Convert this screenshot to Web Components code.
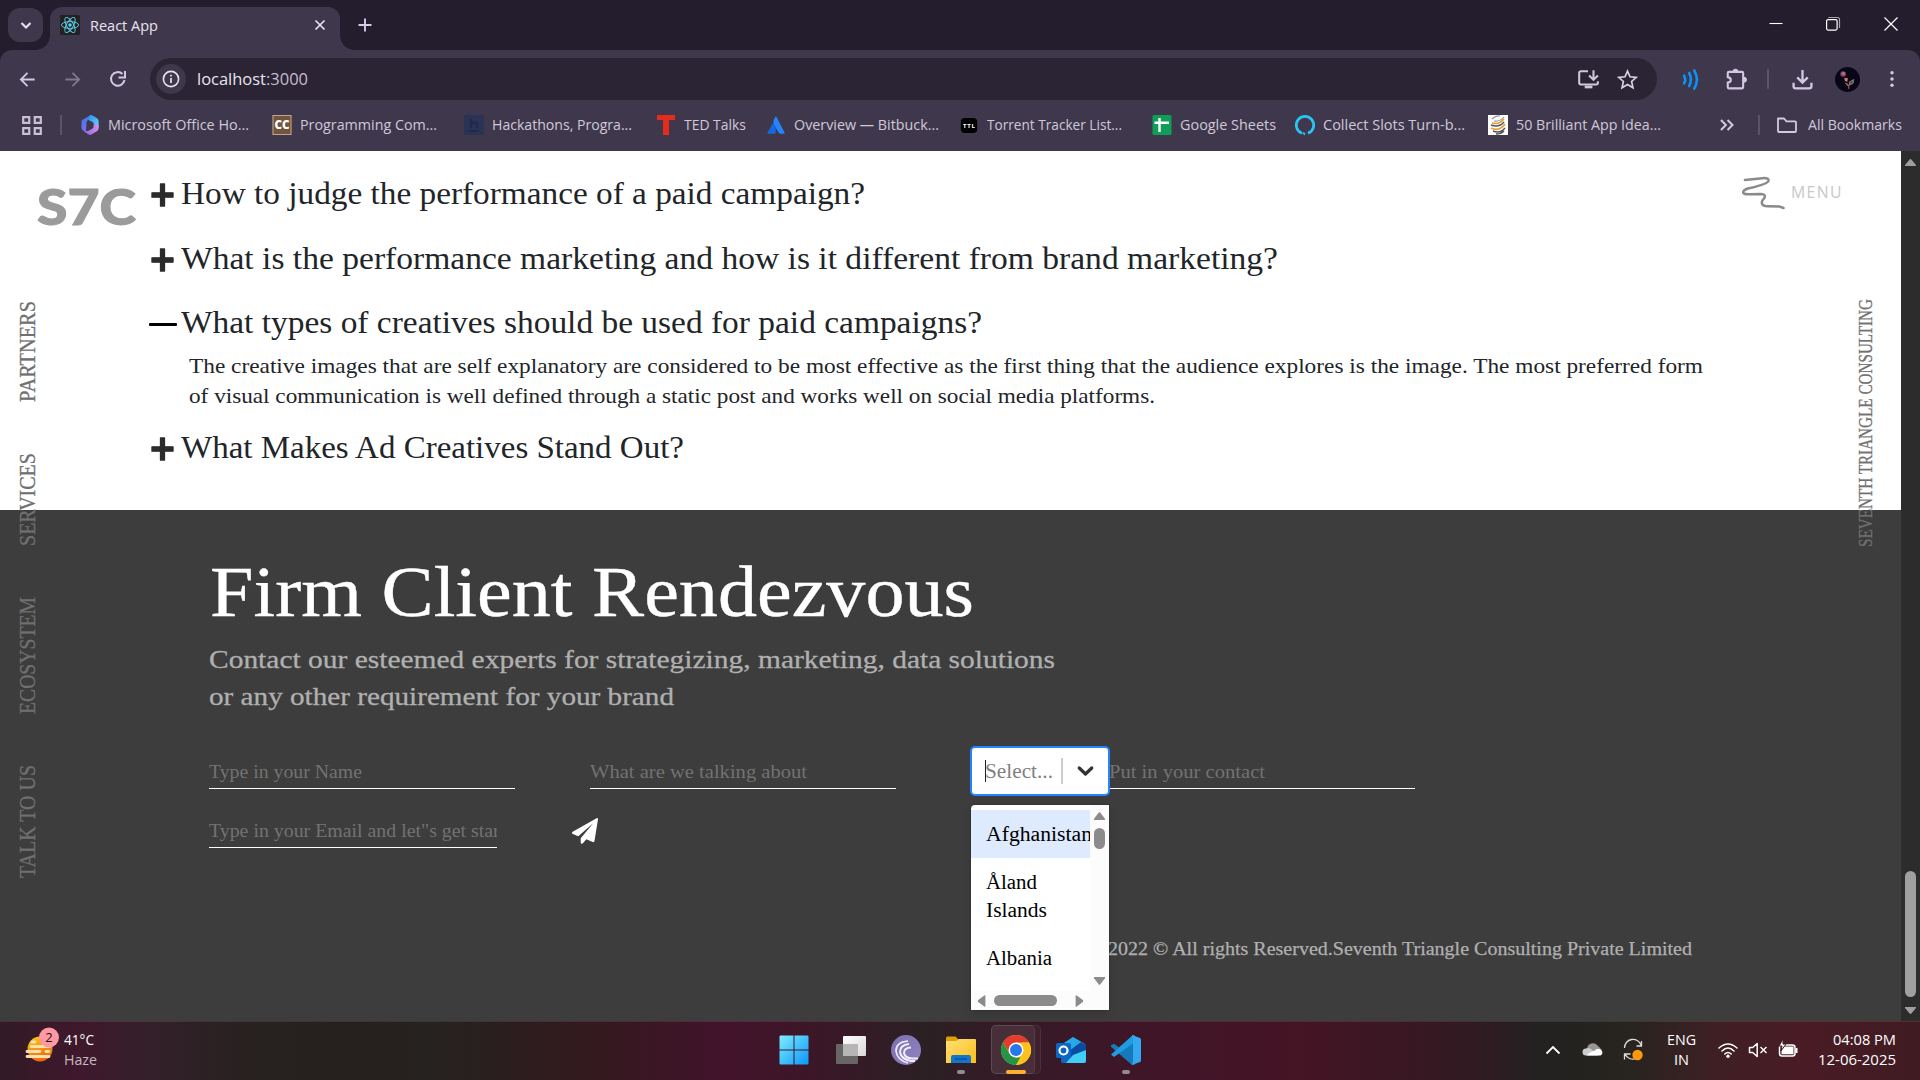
<!DOCTYPE html>
<html lang="en">
<head>
<meta charset="utf-8">
<title>React App</title>
<style>
html,body{margin:0;padding:0;width:1920px;height:1080px;overflow:hidden;background:#231d2d}
body{font-family:"Open Sans","Noto Sans",sans-serif}
</style>
</head>
<body>
<desktop-screen></desktop-screen>
<script>
const make=(name,html,setup,watch=[])=>{
  const t=document.createElement('template');
  t.innerHTML=html;
  customElements.define(name,class extends HTMLElement{
    static get observedAttributes(){return watch;}
    constructor(){super();this.attachShadow({mode:'open'}).appendChild(t.content.cloneNode(true));}
    connectedCallback(){if(setup)setup(this,this.shadowRoot);}
    attributeChangedCallback(){if(setup&&this.isConnected)setup(this,this.shadowRoot);}
  });
};

const ICONS={
 chev:'<path d="M5.500 8l4.500 4.500L14.500 8" fill="none" stroke="#e6deef" stroke-width="2.200"/>',
 react:'<rect width="20" height="20" rx="1.5" fill="#222"/><g fill="none" stroke="#5fd3f3" stroke-width=".9"><ellipse cx="10" cy="10" rx="8.6" ry="3.4"/><ellipse cx="10" cy="10" rx="8.6" ry="3.4" transform="rotate(60 10 10)"/><ellipse cx="10" cy="10" rx="8.6" ry="3.4" transform="rotate(120 10 10)"/></g><circle cx="10" cy="10" r="1.7" fill="#5fd3f3"/>',
 x:'<path d="M5 5l10 10M15 5l-10 10" stroke="#e8e2ef" stroke-width="1.9"/>',
 plus:'<path d="M10 3.5v13M3.5 10h13" stroke="#d6cbe5" stroke-width="1.9"/>',
 min:'<path d="M3.500 9.500h13" stroke="#fff" stroke-width="1.1"/>',
 restore:'<path d="M6 4V3.500h8.500a2 2 0 0 1 2 2V14" fill="none" stroke="#aaa4b0" stroke-width="1.200"/><rect x="3.600" y="5.600" width="10.500" height="10.500" rx="1.500" fill="none" stroke="#fff" stroke-width="1.200"/>',
 winx:'<path d="M3.500 3.500l13 13M16.500 3.500l-13 13" stroke="#fff" stroke-width="1.200"/>',
 back:'<path d="M17.500 10H3.500M10 3L3 10l7 7" fill="none" stroke="#d3c8e3" stroke-width="1.900"/>',
 fwd:'<path d="M2.500 10h14M10 3l7 7-7 7" fill="none" stroke="#80788c" stroke-width="1.900"/>',
 reload:'<path d="M16.500 11a6.800 6.800 0 1 1-2-6" fill="none" stroke="#d3c8e3" stroke-width="2"/><path d="M17 2v6.500h-6.500" fill="none" stroke="#d3c8e3" stroke-width="2"/>',
 info:'<circle cx="10" cy="10" r="7.600" fill="none" stroke="#e8e2ee" stroke-width="1.600"/><path d="M10 9v5M10 5.800v1.800" stroke="#e8e2ee" stroke-width="1.700"/>',
 install:'<path d="M10 3H3.500a1.500 1.500 0 0 0-1.500 1.500v9A1.500 1.500 0 0 0 3.500 15h14a1.500 1.500 0 0 0 1.500-1.500V12" fill="none" stroke="#cfc8d8" stroke-width="1.900"/><path d="M7 16h7v2.500H7z" fill="#cfc8d8"/><path d="M15 2v8M11 6.800l4 4 4-4" fill="none" stroke="#cfc8d8" stroke-width="1.900"/>',
 star:'<path d="M10 2l2.400 5.400 5.900.6-4.400 3.900 1.300 5.900L10 14.700l-5.200 3.100 1.300-5.900L1.700 8l5.900-.6z" fill="none" stroke="#d9d2e2" stroke-width="1.600" stroke-linejoin="miter"/>',
 waves:'<g fill="none" stroke="#0c92f5" stroke-width="3" stroke-linecap="round"><path d="M2.500 6.500q2.500 3.500 0 7M8.500 4q4 6 0 12M14.500 1.500q6 8.500 0 17"/></g>',
 puzzle:'<path d="M7.800 3.500h-4.300a1 1 0 0 0-1 1v3.800q2.800.5 2.800 2.500t-2.800 2.500v4.200a1 1 0 0 0 1 1h12a1 1 0 0 0 1-1V4.500a1 1 0 0 0-1-1z" fill="none" stroke="#d3c8e3" stroke-width="1.900"/><path d="M7.300 3.800a2.200 2.700 0 0 1 4.400 0M16.700 8.500a2.700 2.200 0 0 1 0 4.400" fill="#d3c8e3" stroke="#d3c8e3"/>',
 download:'<path d="M10 1v11.500M5 8l5 5 5-5M1.500 13v3.500a2 2 0 0 0 2 2h13a2 2 0 0 0 2-2V13" fill="none" stroke="#d3c8e3" stroke-width="2.200"/>',
 avatar:'<circle cx="10" cy="10" r="10" fill="#070718"/><circle cx="6.500" cy="5.500" r="2.200" fill="#8a4a66"/><circle cx="6.800" cy="5.200" r="1" fill="#c77a86"/><path d="M7.500 8.500l2.800.5-.5 3-2-1z" fill="#e0785c"/><path d="M8 12.500l2.500 3M11.500 12l3.500-2-.5 3-3 1.500z" stroke="#8a8784" stroke-width=".7" fill="#55534f"/><path d="M9 13q2.500 1 2 4.500" stroke="#b8474c" fill="none"/>',
 dots:'<g fill="#d3c8e3"><circle cx="10" cy="3" r="1.900"/><circle cx="10" cy="10" r="1.900"/><circle cx="10" cy="17" r="1.900"/></g>',
 apps:'<g fill="none" stroke="#c9c1d3" stroke-width="2"><path d="M2 2h5.500v5.500H2zM12.500 2H18v5.500h-5.500zM2 12.500h5.500V18H2zM12.500 12.500H18V18h-5.500z"/></g>',
 office:'<defs><linearGradient id="a" x2="0" y2="1"><stop stop-color="#3d7be8"/><stop offset="1" stop-color="#7a6cf0"/></linearGradient><linearGradient id="b" y2="1" x2="1"><stop stop-color="#2e8df4"/><stop offset="1" stop-color="#64d7f7"/></linearGradient><linearGradient id="c" y2="0"><stop stop-color="#8d62de"/><stop offset="1" stop-color="#cf8df0"/></linearGradient></defs><path d="M10.500.3L3 4.600Q1.500 5.500 1.500 7v6q0 1.500 1.500 2.400l3 1.300.500-9.200q0-1.500 1.300-2.300L13 2z" fill="url(#a)"/><path d="M10 .3q1.500-.5 3 .4L17 3.200q1.600 1 1.600 2.800v6.500L13.500 9V7.500L8.500 5q-.5-3.500 1.500-4.700z" fill="url(#b)"/><path d="M18.600 9.500V13.500q0 1.500-1.400 2.400L11.700 19.200q-1.700 1-3.400 0L3 16q4 .800 7-1l2.500-1.500q1-.6 1-1.800V9.500z" fill="url(#c)"/>',
 cc:'<rect x=".5" width="19" height="20" fill="#74543d"/><rect x="1" y=".5" width="18" height="19" fill="none" stroke="#bda58f"/><text x="10" y="14" text-anchor="middle" font-family="Open Sans" font-weight="800" font-size="11.500" textLength="15" lengthAdjust="spacingAndGlyphs" fill="#fff">CC</text>',
 hack:'<rect width="20" height="20" rx="1" fill="#293455"/><path d="M7 4v9M7 9q6-3 6 1v3M5 16h10" fill="none" stroke="#1f294b" stroke-width="2.200"/>',
 ted:'<path d="M1 0h18v5h-6v15H7V5H1z" fill="#e62b1e"/>',
 atl:'<path d="M10 1q-4 5-2 9l5 8q.5.800 1.500.800H18q1 0 .5-1.300z" fill="#2684ff"/><path d="M6.500 9q.7-.6 1.300.3Q11 14 9.300 18.800H2q-1 0-.500-1.300z" fill="#1868df"/>',
 ttl:'<rect x="1.800" y="3" width="16.400" height="15" rx="4" fill="#000"/><text x="10" y="12.700" text-anchor="middle" font-family="Open Sans" font-weight="700" font-size="6" textLength="12" fill="#fff">TTL</text>',
 sheets:'<rect x=".5" width="19" height="20" rx="1.500" fill="#0f9d58"/><path d="M7.500 3v14M2.500 7.800h14.500" stroke="#fff" stroke-width="2.400"/>',
 ring:'<path d="M7 18.200a8.700 8.700 0 1 1 6 0" fill="none" stroke="#2cc4f4" stroke-width="2.700"/><path d="M8 17.800l2 1.700" stroke="#2cc4f4" stroke-width="2"/>',
 egg:'<rect width="20" height="20" fill="#fff"/><g fill="none"><path d="M4 4q4-4 8-3M6 6q6 1 10-4" stroke="#999" stroke-width="1.200"/><path d="M4 8q7 2 12-4M3 13q8 4 14-4" stroke="#e69b35" stroke-width="1.700"/><path d="M3 10q8 3 13-3M5 16q7 3 12-3M8 19q5 0 8-3" stroke="#555" stroke-width="1.500"/></g>',
 more:'<path d="M4.500 5.500L9 10l-4.500 4.500M10.500 5.500L15 10l-4.500 4.500" fill="none" stroke="#d3cbdc" stroke-width="1.800"/>',
 folder:'<path d="M1 3.500h6l2.500 2.800H18a1 1 0 0 1 1 1V16a1 1 0 0 1-1 1H2a1 1 0 0 1-1-1z" fill="none" stroke="#d3cbdc" stroke-width="1.800" stroke-linejoin="round"/>',
 faqplus:'<path d="M8.200.8h3.600V8.200h7.400v3.600h-7.400v7.400H8.200v-7.400H.8V8.200h7.400z" fill="#2b2b2b" stroke="#2b2b2b" stroke-linejoin="round"/>',
 plane:'<path d="M18.900.1L.5 10.600c-.7.400-.6 1.400.1 1.700l4.200 1.800L16.300 4 6.700 15.600v3.300c0 1 1.100 1.300 1.700.6l2.600-3.100 5 2.100c.6.200 1.200-.1 1.300-.8L20 1C20 .2 19.400-.2 18.900.1z" fill="#fff"/>',
 selchev:'<path d="M5 7.200l5 4.800 5-4.800" fill="none" stroke="#333" stroke-width="2.600" stroke-linecap="round" stroke-linejoin="round"/>',
 squiggle:'<path d="M3 4L21 2.200q7-.4 6 3-1 2.800-20 7.500-7 2-5.500 4.800 1 1.500 6 1.300l12-.3q5 .2 3.500 4-3.500 3.500-2.500 6 1 2.500 6 2.700l12 .3 4 1.500" fill="none" stroke="#8a8a8a" stroke-width="2.600" stroke-linecap="round" stroke-linejoin="round"/>',
 haze:'<defs><linearGradient id="s" y2="1" x2=".3"><stop stop-color="#ffcc13"/><stop offset="1" stop-color="#f0680c"/></linearGradient></defs><circle cx="15" cy="21" r="12.500" fill="url(#s)"/><g stroke="#f8dfaf" stroke-width="2.800" stroke-linecap="round"><path d="M7 14h3M6 18.500h19M2 23.500h13M21 23.500h3M2 28.500h22"/></g><circle cx="24" cy="9.500" r="10" fill="#ff98a3"/><text x="24" y="14.300" text-anchor="middle" font-family="Open Sans" font-size="13" fill="#1a1014">2</text>',
 win:'<defs><linearGradient id="w" gradientUnits="userSpaceOnUse" x1="0" y1="0" x2="30" y2="30"><stop stop-color="#7ff0ff"/><stop offset="1" stop-color="#0a93fb"/></linearGradient></defs><path d="M.5 1.500q0-1 1-1H14.500v14H.500zM15.500.500h13q1 0 1 1v13h-14zM.500 15.500h14v14h-13q-1 0-1-1zM15.500 15.500h14v13q0 1-1 1h-13z" fill="url(#w)"/>',
 task:'<defs><linearGradient id="t" x2="1" y2="1"><stop stop-color="#fff"/><stop offset="1" stop-color="#d8d8d8"/></linearGradient></defs><rect y="9" width="22" height="20" rx="1" fill="#686565"/><rect x="7" y="1" width="23" height="20" rx="1" fill="url(#t)"/><rect x="7" y="9" width="15" height="12" fill="#b7b5b5"/>',
 bt:'<defs><linearGradient id="q" y2="1"><stop stop-color="#7a6fae"/><stop offset="1" stop-color="#9184c1"/></linearGradient></defs><circle cx="15" cy="15" r="15" fill="url(#q)"/><g fill="none" stroke="#f2eefb"><path d="M17 6Q5 7 5 16q1 9 12 12" stroke-width="1.700"/><path d="M18 9q-9 1-9 8 1 7 11 9h4" stroke-width="2"/><path d="M20 12.500q-7 0-7 5.500 1 5 8 5.500h6" stroke-width="2"/></g>',
 explorer:'<defs><linearGradient id="e" x2="1" y2="1"><stop stop-color="#ffe07a"/><stop offset="1" stop-color="#fbbd16"/></linearGradient></defs><path d="M0 3q0-1.500 1.500-1.500h8L13 5v6H0z" fill="#dea100"/><path d="M0 6h10l3-2h16q1 0 1 1v23H0z" fill="url(#e)"/><path d="M5 28v-6q0-2 2-2h16q2 0 2 2v6z" fill="#1275cb"/><path d="M9 24h12" stroke="#084c93" stroke-width="1.300"/>',
 chrome:'<circle cx="15" cy="15" r="15" fill="#ffc21c"/><path d="M2 7.500A15 15 0 0 1 28 7.500H15L8.500 18z" fill="#e33b2e"/><path d="M2 7.500L8.500 18.500 15 22.500h6.500L15 30A15 15 0 0 1 2 7.500z" fill="#259447"/><path d="M28 7.500A15 15 0 0 1 15 30l6.500-11.500V7.500z" fill="#ffc21c"/><circle cx="15" cy="15" r="7.500" fill="#fff"/><circle cx="15" cy="15" r="6" fill="#2679e9"/>',
 outlook:'<path d="M5 10L17 2l13 8v16q0 2-2 2H7q-2 0-2-2z" fill="#1465bd"/><path d="M8 8l9-6 12 7-15 11z" fill="#29a8e8"/><path d="M30 10v6L13 23V16L25 7z" fill="#0c4ca0"/><path d="M30 15v11q0 2-2 2H10l7-8z" fill="#40cdf7"/><rect y="8" width="15" height="15" rx="1.500" fill="#0b66c6"/><circle cx="7.500" cy="15.500" r="4" fill="none" stroke="#fff" stroke-width="2.200"/>',
 vs:'<path d="M22 0L8.500 12.800 3 8.700 0 10.200v1.600L21 30l3-.500V.500z" fill="#1679bc"/><path d="M0 19.500L22 0v8.500L3 22z" fill="#209ce1"/><path d="M21 0l8 3q1 .500 1 1.500v21q0 1-1 1.500l-8 3 1-4V5z" fill="#34a9f1"/>',
 up:'<path d="M3.500 13.500L10 7l6.500 6.500" fill="none" stroke="#fff" stroke-width="1.800"/>',
 cloud:'<path d="M4 10a6 6 0 0 1 11-3l4 4-6 5H3z" fill="#999795"/><path d="M3 16.500a3.500 3.500 0 0 1 0-7q2-1 5 .5l7 6.500z" fill="#ccc"/><path d="M3.500 16.500Q8 12 11 12q4-4 7.500-.5a3 3 0 0 1-1 5z" fill="#fff"/>',
 sync:'<path d="M1.500 8A8.500 8.500 0 0 1 18 5M18.500 1v5h-5M13 18.500A8.500 8.500 0 0 1 2 14M7.500 14h-6v5.500" fill="none" stroke="#ddd" stroke-width="1.300"/><circle cx="14.500" cy="15" r="5.200" fill="#ff980b"/>',
 wifi:'<g fill="none" stroke="#fff" stroke-width="1.600" stroke-linecap="round"><path d="M1 8q9-8 18 0M4 11q6-6 12 0M6.800 14q3.200-3 6.400 0"/></g><circle cx="10" cy="16.200" r="1.700" fill="#fff"/>',
 vol:'<path d="M1.500 7.500h3.200l4.500-4v13l-4.500-4H1.500z" fill="none" stroke="#fff" stroke-width="1.500" stroke-linejoin="round"/><path d="M12.500 7l6 6M18.500 7l-6 6" stroke="#fff" stroke-width="1.400"/>',
 batt:'<rect x="1.500" y="6" width="15.500" height="11" rx="2.500" fill="none" stroke="#fff" stroke-width="1.500"/><path d="M18.500 9v5" stroke="#fff" stroke-width="2"/><path d="M6 7.500h9.500v7.800H3.500V11z" fill="#fff"/><path d="M5 0L1 7h3l-1 5 5-7H5z" fill="#fff" stroke="#421a24"/>',
 tri:'<path d="M8.600 4.500q1.400-1.700 2.800 0l7 10q1 2-1 2H2.600q-2 0-1-2z" fill="var(--tri,#8b8b8b)"/>'
};
const BOX={squiggle:'0 0 44 35',haze:'0 0 36 36',win:'0 0 30 30',task:'0 0 30 30',bt:'0 0 30 30',explorer:'0 0 30 30',chrome:'0 0 30 30',outlook:'0 0 30 30',vs:'0 0 30 30'};

/* Vector icon; "box" gives its width and height */
make('ui-icon','<style>:host{display:block;flex:none}div{height:100%}svg{display:block;width:100%;height:100%;overflow:visible}</style><div></div>',(el,r)=>{
  const n=el.getAttribute('name');
  const [w,h]=(el.getAttribute('box')||'20 20').split(' ');
  el.style.width=w+'px';el.style.height=(h||w)+'px';
  if(ICONS[n])r.querySelector('div').innerHTML=`<svg viewBox="${BOX[n]||'0 0 20 20'}" preserveAspectRatio="none">${ICONS[n]}</svg>`;
},['name','box']);

make('browser-tabs',`<style>
:host{display:flex;height:50px;background:#231d2d;align-items:flex-start}
.search{width:35px;height:34px;margin:8px 7px 0 8px;border-radius:12px;background:#3f374b;display:grid;place-items:center}
.tab{position:relative;margin-top:7px;width:290px;height:43px;background:#3f384c;border-radius:12px 12px 0 0;display:flex;align-items:center;box-sizing:border-box;padding:0 11px 7px 10px}
.tab:before,.tab:after{content:"";position:absolute;bottom:0;width:14px;height:14px}
.tab:before{left:-14px;background:radial-gradient(circle at 0 0,transparent 13.5px,#3f384c 14px)}
.tab:after{right:-14px;background:radial-gradient(circle at 100% 0,transparent 13.5px,#3f384c 14px)}
fit-text{margin:1px 0 0 10px;color:#e9e3ef;font-size:14.5px;line-height:22px}
.grow{flex:1}.win{display:flex;margin:14px 19px 0 0;gap:38px}
</style>
<div class="search"><ui-icon name="chev" box="20 20"></ui-icon></div>
<div class="tab"><ui-icon name="react"></ui-icon><fit-text w="68">React App</fit-text><span class="grow"></span><ui-icon name="x" box="18"></ui-icon></div>
<ui-icon name="plus" style="margin:15px 0 0 15px"></ui-icon><span class="grow"></span>
<div class="win"><ui-icon name="min" style="margin-right:-1px"></ui-icon><ui-icon name="restore"></ui-icon><ui-icon name="winx"></ui-icon></div>`);

make('browser-toolbar',`<style>
:host{display:block;height:58px;background:#231d2d}
.bar{height:58px;background:#3f384c;border-radius:12px 12px 0 0;display:flex;align-items:center;padding-left:18px;box-sizing:border-box}
.omni{display:flex;align-items:center;width:1507px;height:42px;border-radius:21px;background:#2a2434;margin-left:22px;box-sizing:border-box;padding:0 19px 0 6px}
.site{width:30px;height:30px;border-radius:50%;background:#3f374b;display:grid;place-items:center}
fit-text{margin-left:10.500px;color:#e9e3ef;font-size:17px;line-height:26px}
em{font-style:normal;color:#c6becf}.grow{flex:1}.sep{width:2px;height:20px;background:#5b5368}
</style><div class="bar"><ui-icon name="back" box="19"></ui-icon><ui-icon name="fwd" box="19" style="margin-left:26px"></ui-icon><ui-icon name="reload" style="margin-left:26px"></ui-icon>
<div class="omni"><span class="site"><ui-icon name="info" box="20"></ui-icon></span><fit-text w="111">localhost<em>:3000</em></fit-text><span class="grow"></span><ui-icon name="install" box="22"></ui-icon><ui-icon name="star" box="21" style="margin-left:18px"></ui-icon></div>
<ui-icon name="waves" box="17 21" style="margin-left:25px"></ui-icon><ui-icon name="puzzle" box="22" style="margin-left:26px"></ui-icon><span class="sep" style="margin-left:20px"></span>
<ui-icon name="download" box="21" style="margin-left:23px"></ui-icon><ui-icon name="avatar" box="25" style="margin-left:22px"></ui-icon><ui-icon name="dots" box="18" style="margin-left:23px"></ui-icon></div>`);

make('book-mark',`<style>:host{display:flex;align-items:center;gap:7.5px;height:22px;box-sizing:border-box;flex:none}fit-text{font-size:14.5px;line-height:22px;color:#d0c8da}</style><ui-icon></ui-icon><fit-text><slot></slot></fit-text>`,(el,r)=>{
  r.querySelector('ui-icon').setAttribute('name',el.getAttribute('icon'));
  r.querySelector('fit-text').setAttribute('w',el.getAttribute('w'));
  if(el.getAttribute('slotw'))el.style.width=el.getAttribute('slotw')+'px';
  if(el.getAttribute('gap'))el.style.gap=el.getAttribute('gap')+'px';
});

make('bookmarks-bar',`<style>:host{display:flex;align-items:center;height:43px;background:#3f384c;box-sizing:border-box;padding:0 18px 9px 21px}.sep{width:2px;height:20px;background:#5b5368;flex:none}.grow{flex:1}</style>
<ui-icon name="apps" box="22 21"></ui-icon><span class="sep" style="margin:0 18px 0 17px"></span>
<book-mark icon="office" w="141" slotw="192">Microsoft Office Ho...</book-mark><book-mark icon="cc" w="137" slotw="192">Programming Com...</book-mark><book-mark icon="hack" w="140" slotw="192">Hackathons, Progra...</book-mark><book-mark icon="ted" w="62" slotw="110">TED Talks</book-mark><book-mark icon="atl" w="145" slotw="193">Overview — Bitbuck...</book-mark><book-mark icon="ttl" w="135" slotw="193">Torrent Tracker List...</book-mark><book-mark icon="sheets" w="96" slotw="143">Google Sheets</book-mark><book-mark icon="ring" w="142" slotw="193">Collect Slots Turn-b...</book-mark><book-mark icon="egg" w="145">50 Brilliant App Idea...</book-mark>
<span class="grow"></span><ui-icon name="more" box="22" style="margin-right:20px"></ui-icon><span class="sep" style="margin-right:17px"></span><book-mark icon="folder" w="94" gap="11">All Bookmarks</book-mark>`);

make('faq-item',`<style>:host{display:block}.row{display:flex;align-items:center;height:36px}.ic{width:32px;display:flex;flex:none}.ic ui-icon{margin-left:2px}.minus{width:28px;height:3px;background:#000;border-radius:1px;margin-top:2px}fit-text{font-size:31px;line-height:36px;color:#212529}</style><div class="row"><span class="ic"></span><fit-text><slot></slot></fit-text></div><slot name="answer"></slot>`,(el,r)=>{
  r.querySelector('.ic').innerHTML=el.hasAttribute('open')?'<i class="minus"></i>':'<ui-icon name="faqplus" box="23 24" style="margin-top:2px"></ui-icon>';
  r.querySelector('fit-text').setAttribute('w',el.getAttribute('w'));
});

make('line-field',`<style>:host{display:block;height:31px;border-bottom:1px solid #fff;overflow:hidden;flex:none}fit-text{font-size:19px;line-height:29px;color:#727272}</style><fit-text><slot></slot></fit-text>`,(el,r)=>r.querySelector('fit-text').setAttribute('w',el.getAttribute('w')));

make('country-select',`<style>
:host{display:block;position:relative;width:140px;height:50px;z-index:3;flex:none}
.ctl{box-sizing:border-box;height:50px;border:2px solid #2684ff;border-radius:5px;background:#fff;display:flex;align-items:center;padding-left:13px}
.ph{border-left:1px solid #222;height:22px;width:75px;display:flex;align-items:center}.ph fit-text{font-size:20px;line-height:26px;color:#808080;margin-left:-1px}
.sep{width:2px;height:26px;background:#ccc;margin-right:10px}
.menu{position:absolute;left:1px;top:59px;width:138px;height:205px;background:#fff;border-radius:4px 0 0 0;box-shadow:0 0 0 1px rgba(0,0,0,.1),0 4px 11px rgba(0,0,0,.14);display:grid;grid-template:186px 19px/119px 19px}
.list{overflow:hidden;padding-top:5px}
.opt{padding:10px 0 10px 15px}.opt.on{background:#deebff}.opt fit-text{font-size:20px;line-height:28px;color:#000}
.v,.h{background:#fcfcfc;display:flex;align-items:center}.v{flex-direction:column;padding-top:5px;box-sizing:border-box}.h{padding-left:4px;box-sizing:border-box}.c{background:#fcfcfc}
.t{background:#8b8b8b;border-radius:6px;flex:none}
</style><div class="ctl"><span class="ph"><fit-text w="68">Select...</fit-text></span><i class="sep"></i><ui-icon name="selchev" box="25 25"></ui-icon></div>
<div class="menu"><div class="list"><div class="opt on"><fit-text w="106">Afghanistan</fit-text></div><div class="opt"><fit-text w="51">Åland</fit-text><fit-text w="61">Islands</fit-text></div><div class="opt"><fit-text w="66">Albania</fit-text></div></div>
<div class="v"><ui-icon name="tri" box="13 12"></ui-icon><i class="t" style="width:11px;height:21px;margin:6px 0 126px"></i><ui-icon name="tri" box="13 12" style="transform:rotate(180deg)"></ui-icon></div>
<div class="h"><ui-icon name="tri" box="13 12" style="transform:rotate(-90deg)"></ui-icon><i class="t" style="width:63px;height:11px;margin:0 16px 0 6px"></i><ui-icon name="tri" box="13 12" style="transform:rotate(90deg)"></ui-icon></div><div class="c"></div></div>`);

make('contact-section',`<style>
:host{display:block;background:#3d3d3d;height:511px;box-sizing:border-box;padding:35px 0 0 209px;width:1901px}
.title{font-size:72px;line-height:94px;height:90px;color:#fff;margin-left:1px;-webkit-text-stroke:.4px #fff}.sub{font-size:26px;line-height:37px;color:#b0b0b0;-webkit-text-stroke:.3px #b0b0b0}
.row{display:flex}.row line-field{margin-top:11px}
.foot{font-size:19.5px;line-height:30px;color:#b0b0b0;-webkit-text-stroke:.25px #b0b0b0;margin:86px 0 0 899px}
</style>
<fit-text class="title" w="764">Firm Client Rendezvous</fit-text>
<fit-text class="sub" w="846" style="margin-top:6px">Contact our esteemed experts for strategizing, marketing, data solutions</fit-text><fit-text class="sub" w="465">or any other requirement for your brand</fit-text>
<div class="row" style="margin-top:31px"><line-field w="153" style="width:306px">Type in your Name</line-field><line-field w="217" style="width:306px;margin-left:75px">What are we talking about</line-field><country-select style="margin-left:74px"></country-select><line-field w="156" style="width:306px;margin-left:-1px">Put in your contact</line-field></div>
<div class="row" style="margin-top:9px;height:43px"><line-field w="315" style="width:288px">Type in your Email and let"s get started</line-field><ui-icon name="plane" box="26 26" style="margin:12.500px 0 0 75px"></ui-icon></div>
<fit-text class="foot" w="584">2022 © All rights Reserved.Seventh Triangle Consulting Private Limited</fit-text>`);

make('side-label',`<style>:host{display:block;color:#707070;-webkit-text-stroke:.3px #707070}span{display:inline-block;writing-mode:vertical-rl;white-space:pre;transform-origin:0 0;line-height:22px}</style><span><slot></slot></span>`,(el,r)=>{
  const s=r.querySelector('span'),h=+el.getAttribute('h');
  el.style.height=h+'px';el.style.width='22px';
  const k=h/s.getBoundingClientRect().height;
  s.style.transform=`translate(22px,${h}px) rotate(180deg) scaleY(${k})`;
});

make('web-page',`<style>
:host{display:flex;position:relative;height:870px;background:#2c2c2c;font-family:"Liberation Serif",serif}
.doc{width:1901px;background:#fff;flex:none}
.faq{height:359px;box-sizing:border-box;padding:25px 0 0 149px}
.p{font-size:21.5px;line-height:30px;color:#212529;margin-left:40px}
.logo{position:absolute;left:37px;top:30px;font:900 50px/50px Lato,sans-serif;color:#9b9b9b;-webkit-text-stroke:1px #9b9b9b}
.menu{position:absolute;left:1742px;top:25px;display:flex;align-items:flex-start;font-family:"Open Sans",sans-serif}
.menu fit-text{font-size:16.5px;line-height:24px;color:#c8c8c8;letter-spacing:1.5px;margin:4px 0 0 6px}
nav{position:absolute;left:17px;top:149.500px;display:flex;flex-direction:column;font-size:23px}
.right{position:absolute;left:1855px;top:148px;font-size:18.5px}
.bar{width:19px;display:flex;flex-direction:column;align-items:center;--tri:#9f9f9f}
.thumb{width:11px;height:126px;border-radius:6px;background:#9f9f9f}
</style>
<div class="doc"><div class="faq">
<faq-item w="684">How to judge the performance of a paid campaign?</faq-item>
<faq-item w="1097" style="margin-top:29px">What is the performance marketing and how is it different from brand marketing?</faq-item>
<faq-item open w="801" style="margin-top:28px">What types of creatives should be used for paid campaigns?<div slot="answer" style="padding-top:10px"><fit-text class="p" w="1514">The creative images that are self explanatory are considered to be most effective as the first thing that the audience explores is the image. The most preferred form</fit-text><fit-text class="p" w="966">of visual communication is well defined through a static post and works well on social media platforms.</fit-text></div></faq-item>
<faq-item w="503" style="margin-top:19px">What Makes Ad Creatives Stand Out?</faq-item>
</div><contact-section></contact-section></div>
<div class="bar"><ui-icon name="tri" box="13 11" style="margin-top:6px"></ui-icon><i class="thumb" style="margin-top:703px"></i><ui-icon name="tri" box="13 11" style="margin-top:8px;transform:rotate(180deg)"></ui-icon></div>
<fit-text class="logo" w="99">S7C</fit-text>
<div class="menu"><ui-icon name="squiggle" box="43 34"></ui-icon><fit-text w="52">MENU</fit-text></div>
<nav><side-label h="101">PARTNERS</side-label><side-label h="93" style="margin-top:51px">SERVICES</side-label><side-label h="117" style="margin-top:51px">ECOSYSTEM</side-label><side-label h="113" style="margin-top:51px">TALK TO US</side-label></nav>
<side-label class="right" h="248">SEVENTH TRIANGLE CONSULTING</side-label>`);

make('task-app',`<style>:host{display:flex;flex-direction:column;align-items:center;width:30px;height:59px;padding-top:14px;box-sizing:border-box;position:relative;flex:none}i{height:4px;border-radius:2px;margin-top:5px;background:#958a90;width:8px}:host([active]) i{background:#ffb02e;width:20px}:host([idle]) i{display:none}
:host([active]):before,:host([active]):after{content:"";position:absolute;top:4px;height:49px;box-sizing:border-box;border:1px solid #ffffff12;border-radius:5px;background:#ffffff10}
:host([active]):before{left:-10px;width:44px}:host([active]):after{left:-10px;width:50px;background:#ffffff08}ui-icon,i{position:relative;z-index:1}</style><ui-icon box="30"></ui-icon><i></i>`,(el,r)=>r.querySelector('ui-icon').setAttribute('name',el.getAttribute('icon')));

make('task-bar',`<style>
:host{display:flex;height:59px;box-sizing:border-box;color:#fff;background:linear-gradient(90deg,#321a26 0,#3f182c 80px,#33202a 150px,#27211f 260px,#26221f 440px,#34191f 600px,#43132b 730px,#3d1628 800px,#2b2024 925px,#351b26 1000px,#401528 1160px,#451425 1300px,#301a22 1480px,#222221 1545px,#28241f 1630px,#3f1f24 1720px,#4a1c25 1800px,#401b22 1920px);box-shadow:inset 0 1px #ffffff18}
fit-text{font-size:14.5px;line-height:20px}.col{padding-top:8.500px;display:flex;flex-direction:column}.apps{display:flex;margin-left:682px;gap:25px}.grow{flex:1}
</style>
<ui-icon name="haze" box="36" style="margin:7px 0 0 25px"></ui-icon><div class="col" style="margin-left:3px"><fit-text w="30">41°C</fit-text><fit-text w="33" style="color:#c3b9be">Haze</fit-text></div>
<div class="apps"><task-app idle icon="win"></task-app><task-app idle icon="task" style="margin-left:2px"></task-app><task-app idle icon="bt"></task-app><task-app icon="explorer"></task-app><task-app active icon="chrome"></task-app><task-app idle icon="outlook"></task-app><task-app icon="vs"></task-app></div>
<span class="grow"></span>
<ui-icon name="up" style="margin:19px 0 0"></ui-icon><ui-icon name="cloud" box="20" style="margin:18px 0 0 20px"></ui-icon><ui-icon name="sync" box="20" style="margin:19px 0 0 20px"></ui-icon>
<div class="col" style="margin-left:24px;align-items:center;padding-top:9px"><fit-text w="29">ENG</fit-text><fit-text w="15">IN</fit-text></div>
<ui-icon name="wifi" style="margin:19px 0 0 22px"></ui-icon><ui-icon name="vol" style="margin:19px 0 0 10px"></ui-icon><ui-icon name="batt" box="20" style="margin:18px 0 0 10px"></ui-icon>
<div class="col" style="margin:0 24px 0 20px;align-items:flex-end"><fit-text w="63">04:08 PM</fit-text><fit-text w="78">12-06-2025</fit-text></div>`);

make('desktop-screen',`<style>:host{display:flex;flex-direction:column;width:1920px;height:1080px;overflow:hidden}</style><browser-tabs></browser-tabs><browser-toolbar></browser-toolbar><bookmarks-bar></bookmarks-bar><web-page></web-page><task-bar></task-bar>`);

/* One line of text set to an exact width; defined last so that it measures in place */
make('fit-text','<style>:host{display:block;flex:none;white-space:pre}span{display:inline-block;transform-origin:0 0;vertical-align:top}</style><span><slot></slot></span>',(el,r)=>{
  const s=r.querySelector('span'),w=+el.getAttribute('w');
  if(!w)return;
  s.style.transform='none';
  const n=s.getBoundingClientRect().width;
  el.style.width=w+'px';
  if(n)s.style.transform=`scaleX(${w/n})`;
});
</script>
</body>
</html>
